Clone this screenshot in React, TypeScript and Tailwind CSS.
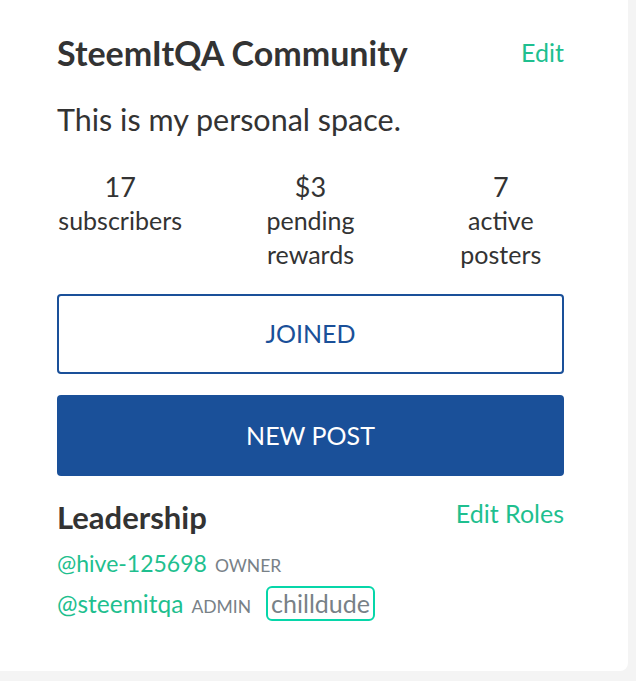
import React from "react";

const stats = [
  { value: "17", label: ["subscribers"] },
  { value: "$3", label: ["pending", "rewards"] },
  { value: "7", label: ["active", "posters"] },
];

const App = () => {
  return (
    <div className="min-h-screen bg-[#f4f4f4] font-['Lato',sans-serif] text-[#333]">
      <div className="w-[628px] h-[671px] bg-white rounded-br-lg pl-[57px] pr-[64px] pt-[33px]">
        {/* Title */}
        <div className="flex items-start justify-between">
          <h2 className="text-[34px] leading-[40px] font-bold">SteemItQA Community</h2>
          <a className="text-[25px] leading-[30px] mt-[4px] text-[#1fbf8f]">Edit</a>
        </div>
        <p className="mt-[26px] text-[30.5px] leading-[40px]">This is my personal space.</p>

        {/* Stats */}
        <div className="grid grid-cols-3 -ml-[32px] -mr-[32px] mt-[32px] text-center">
          {stats.map((s) => (
            <div key={s.value}>
              <div className="text-[27px] leading-[32px]">{s.value}</div>
              {s.label.map((l) => (
                <div key={l} className="text-[25px] leading-[34px]">
                  {l}
                </div>
              ))}
            </div>
          ))}
        </div>

        {/* Buttons */}
        <button className="mt-[23px] w-full h-[80px] border-2 border-[#1a5099] rounded-[4px] text-[#1a5099] text-[25px] uppercase">
          Joined
        </button>
        <button className="mt-[21px] w-full h-[81px] bg-[#1a5099] rounded-[4px] text-white text-[25px] uppercase">
          New Post
        </button>

        {/* Leadership */}
        <div className="mt-[23px] flex items-start justify-between">
          <h3 className="text-[31px] leading-[36px] font-bold">Leadership</h3>
          <a className="text-[25px] leading-[30px] -mt-[1px] text-[#1fbf8f]">Edit Roles</a>
        </div>
        <div className="mt-[13px] flex items-baseline gap-[8px]">
          <a className="text-[23px] leading-[30px] text-[#1fbf8f]">@hive-125698</a>
          <span className="text-[17.5px] uppercase text-[#788187]">owner</span>
        </div>
        <div className="mt-[7px] flex items-baseline gap-[8px]">
          <a className="text-[24.5px] leading-[30px] text-[#1fbf8f]">@steemitqa</a>
          <span className="text-[17.5px] uppercase text-[#788187]">admin</span>
          <span className="ml-[7px] border-2 border-[#06d6a9] rounded-[6px] px-[3px] text-[25px] leading-[31px] text-[#788187]">
            chilldude
          </span>
        </div>
      </div>
    </div>
  );
};

export default App;
